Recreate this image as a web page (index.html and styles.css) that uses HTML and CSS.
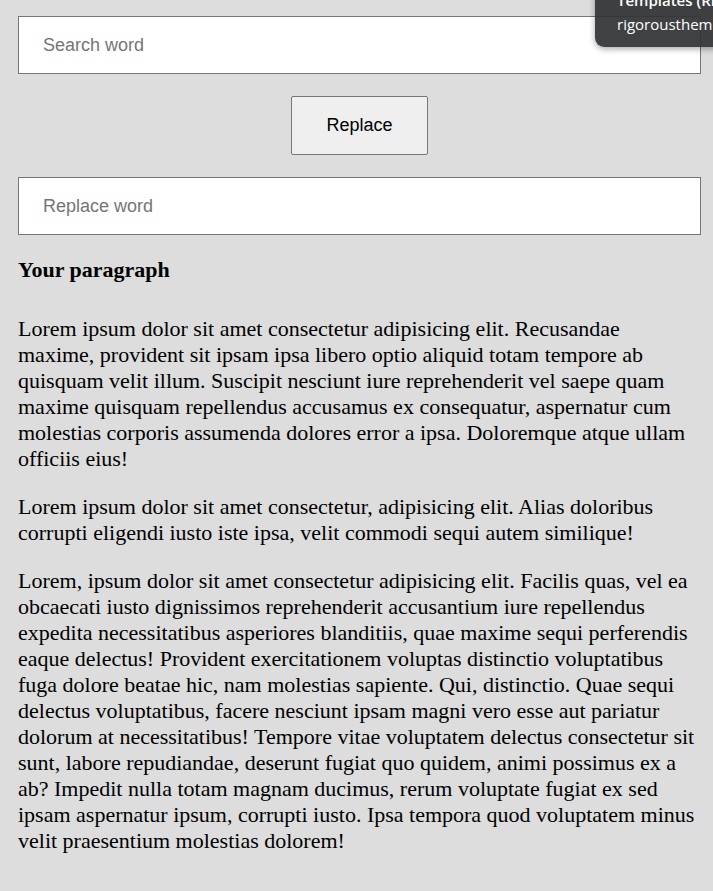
FILE: index.html
```html
<!DOCTYPE html>
<html lang="en">
<head>
<meta charset="utf-8">
<title>Search and Replace</title>
<link rel="stylesheet" href="styles.css">
</head>
<body>
<div class="wrap">
  <input class="field" type="text" placeholder="Search word">
  <div class="btn-row"><button class="btn" type="button">Replace</button></div>
  <input class="field" type="text" placeholder="Replace word">
  <h4 class="title">Your paragraph</h4>
  <div class="text">
    <p>Lorem ipsum dolor sit amet consectetur adipisicing elit. Recusandae maxime, provident sit ipsam ipsa libero optio aliquid totam tempore ab quisquam velit illum. Suscipit nesciunt iure reprehenderit vel saepe quam maxime quisquam repellendus accusamus ex consequatur, aspernatur cum molestias corporis assumenda dolores error a ipsa. Doloremque atque ullam officiis eius!</p>
    <p>Lorem ipsum dolor sit amet consectetur, adipisicing elit. Alias doloribus corrupti eligendi iusto iste ipsa, velit commodi sequi autem similique!</p>
    <p>Lorem, ipsum dolor sit amet consectetur adipisicing elit. Facilis quas, vel ea obcaecati iusto dignissimos reprehenderit accusantium iure repellendus expedita necessitatibus asperiores blanditiis, quae maxime sequi perferendis eaque delectus! Provident exercitationem voluptas distinctio voluptatibus fuga dolore beatae hic, nam molestias sapiente. Qui, distinctio. Quae sequi delectus voluptatibus, facere nesciunt ipsam magni vero esse aut pariatur dolorum at necessitatibus! Tempore vitae voluptatem delectus consectetur sit sunt, labore repudiandae, deserunt fugiat quo quidem, animi possimus ex a ab? Impedit nulla totam magnam ducimus, rerum voluptate fugiat ex sed ipsam aspernatur ipsum, corrupti iusto. Ipsa tempora quod voluptatem minus velit praesentium molestias dolorem!</p>
  </div>
</div>
<div class="tip">
  <div class="tip-title">Templates (Rigorous)</div>
  <div class="tip-sub">rigorousthemes.com</div>
</div>
</body>
</html>
```
FILE: styles.css
```css
html, body {
  margin: 0;
  padding: 0;
  background: #dddddd;
}
body {
  font-family: "Liberation Serif", "Times New Roman", serif;
  color: #000;
  overflow: hidden;
}
.wrap {
  padding: 16px 12px 0 18px;
  display: flex;
  flex-direction: column;
}
.field {
  box-sizing: border-box;
  width: 100%;
  height: 58px;
  margin: 0;
  padding: 0 24px;
  border: 1px solid #767676;
  border-radius: 0;
  background: #fff;
  font-family: "Liberation Sans", Arial, sans-serif;
  font-size: 18px;
  color: #000;
  outline: none;
}
.field::placeholder {
  color: #757575;
}
.btn-row {
  display: flex;
  justify-content: center;
  margin: 22px 0;
}
.btn {
  box-sizing: border-box;
  width: 137px;
  height: 59px;
  background: #efefef;
  border: 1px solid #767676;
  border-radius: 2px;
  font-family: "Liberation Sans", Arial, sans-serif;
  font-size: 18px;
  color: #000;
  padding: 0;
}
.title {
  font-size: 22px;
  font-weight: bold;
  margin: 22px 0 33px;
}
.text p {
  font-size: 22px;
  margin: 0 0 22px;
}
.tip {
  position: absolute;
  top: -22px;
  left: 595px;
  width: 150px;
  height: 69px;
  box-sizing: border-box;
  padding: 10px 0 0 22px;
  background: rgba(50, 51, 53, 0.93);
  border-radius: 9px;
  box-shadow: 0 2px 6px rgba(0, 0, 0, 0.35);
  color: #fff;
  font-family: "Open Sans", "Noto Sans", sans-serif;
  font-size: 15px;
  line-height: 24px;
  white-space: nowrap;
  overflow: hidden;
}
.tip-title {
  font-weight: 600;
}
```
